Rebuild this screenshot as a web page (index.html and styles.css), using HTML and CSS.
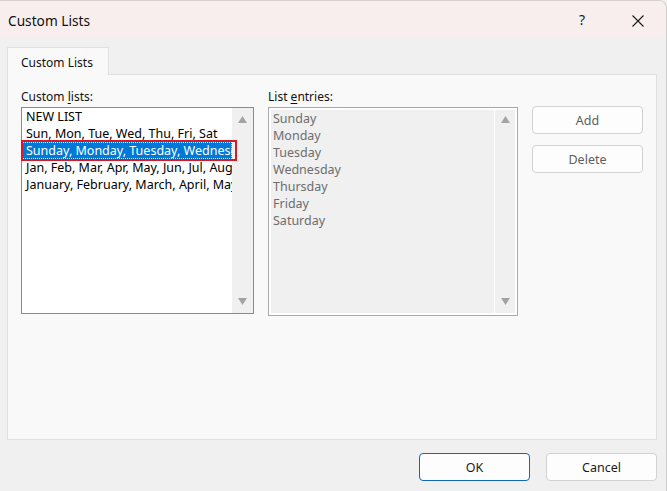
FILE: index.html
```html
<!DOCTYPE html>
<html>
<head>
<meta charset="utf-8">
<title>Custom Lists</title>
<link rel="stylesheet" href="styles.css">
</head>
<body>
<div class="window">
  <div class="titlebar">
    <span class="title">Custom Lists</span>
    <div class="title-actions">
      <span class="help">?</span>
      <span class="close">
        <svg width="12" height="12" viewBox="0 0 12 12"><path d="M0.5 0.5 L11.5 11.5 M11.5 0.5 L0.5 11.5" stroke="#1a1a1a" stroke-width="1.1" fill="none"/></svg>
      </span>
    </div>
  </div>
  <div class="content">
    <div class="tabs"><div class="tab">Custom Lists</div></div>
    <div class="panel">
      <div class="col col-left">
        <div class="label">Custom <u>l</u>ists:</div>
        <div class="listbox">
          <ul class="items">
            <li>NEW LIST</li>
            <li>Sun, Mon, Tue, Wed, Thu, Fri, Sat</li>
            <li class="selected">Sunday, Monday, Tuesday, Wednesday, Thursday, Friday, Saturday</li>
            <li>Jan, Feb, Mar, Apr, May, Jun, Jul, Aug, Sep, Oct, Nov, Dec</li>
            <li>January, February, March, April, May, June, July, August, September, October, November, December</li>
          </ul>
          <div class="scrollbar">
            <svg class="arrow" width="9" height="7" viewBox="0 0 9 7"><path d="M4.5 0 L9 7 L0 7 Z" fill="#a3a3a3"/></svg>
            <svg class="arrow" width="9" height="7" viewBox="0 0 9 7"><path d="M0 0 L9 0 L4.5 7 Z" fill="#a3a3a3"/></svg>
          </div>
          <div class="annotation"></div>
        </div>
      </div>
      <div class="col col-right">
        <div class="label">List <u>e</u>ntries:</div>
        <div class="listbox listbox-disabled">
          <ul class="items">
            <li>Sunday</li>
            <li>Monday</li>
            <li>Tuesday</li>
            <li>Wednesday</li>
            <li>Thursday</li>
            <li>Friday</li>
            <li>Saturday</li>
          </ul>
          <div class="scrollbar">
            <svg class="arrow" width="9" height="7" viewBox="0 0 9 7"><path d="M4.5 0 L9 7 L0 7 Z" fill="#a3a3a3"/></svg>
            <svg class="arrow" width="9" height="7" viewBox="0 0 9 7"><path d="M0 0 L9 0 L4.5 7 Z" fill="#a3a3a3"/></svg>
          </div>
        </div>
      </div>
      <div class="col col-buttons">
        <button class="btn btn-disabled">Add</button>
        <button class="btn btn-disabled">Delete</button>
      </div>
    </div>
    <div class="footer">
      <button class="btn btn-default">OK</button>
      <button class="btn">Cancel</button>
    </div>
  </div>
</div>
</body>
</html>
```

FILE: styles.css
```css
* { box-sizing: border-box; }

html, body {
  margin: 0;
  padding: 0;
  background: #f0f0f0;
}

body {
  font-family: "Noto Sans", "Open Sans", sans-serif;
  color: #000;
}

.window {
  width: 667px;
  height: 491px;
  background: #f0f0f0;
  border-top: 1px solid #d6d0d0;
  border-right: 1px solid #cfcfcf;
  border-radius: 0 8px 0 8px;
  overflow: hidden;
  display: flex;
  flex-direction: column;
}

.titlebar {
  height: 37px;
  background: #f9eeee;
  display: flex;
  align-items: center;
  justify-content: space-between;
  padding-left: 8px;
  flex-shrink: 0;
}

.title {
  font-size: 13.7px;
  color: #111;
  margin-top: 1px;
}

.title-actions {
  display: flex;
  align-items: center;
  height: 100%;
}

.help {
  font-size: 14px;
  width: 46px;
  text-align: center;
  color: #1a1a1a;
  margin-right: 10px;
}

.close {
  width: 46px;
  height: 100%;
  display: flex;
  align-items: center;
  justify-content: center;
  margin-right: 5px;
  padding-top: 2px;
}

.content {
  flex: 1;
  padding: 9px 9px 0 7px;
  display: flex;
  flex-direction: column;
}

.tabs {
  display: flex;
  height: 27px;
}

.tab {
  width: 102px;
  height: 28px;
  background: #f9f9f9;
  border: 1px solid #e0e0e0;
  border-bottom: none;
  font-size: 12px;
  padding: 6px 0 0 13px;
  position: relative;
  z-index: 1;
  color: #111;
}

.panel {
  height: 366px;
  width: 650px;
  background: #f9f9f9;
  border: 1px solid #e0e0e0;
  padding: 13px 13px 0 13px;
  display: flex;
  align-items: flex-start;
  gap: 14px;
}

.col { display: flex; flex-direction: column; }
.col-left { width: 233px; }
.col-right { width: 250px; }
.col-buttons { width: 111px; padding-top: 18px; gap: 11px; }

.label {
  font-size: 12px;
  line-height: 17px;
  margin-bottom: 2px;
  color: #111;
}
.label u { text-decoration-thickness: 1px; text-underline-offset: 2px; }

.listbox {
  position: relative;
  display: flex;
  height: 207px;
  background: #fff;
  border: 1px solid #8a8a8a;
}

.items {
  list-style: none;
  margin: 0;
  padding: 0;
  flex: 1;
  min-width: 0;
  overflow: hidden;
  font-size: 12.5px;
  line-height: 17px;
}

.items li {
  white-space: nowrap;
  overflow: hidden;
  padding-left: 4px;
  color: #000;
}

.items li.selected {
  background: #0078d7;
  color: #fff;
  outline: 1px dotted rgba(255, 255, 255, 0.85);
  outline-offset: -1px;
}

.scrollbar {
  width: 21px;
  background: #f0f0f0;
  display: flex;
  flex-direction: column;
  justify-content: space-between;
  align-items: center;
  padding: 8px 0 8px 0;
}

.annotation {
  position: absolute;
  left: -1px;
  top: 32px;
  width: 216px;
  height: 21px;
  border: 2px solid #e3161d;
  pointer-events: none;
}

.listbox-disabled {
  height: 209px;
  border-color: #a9a9a9;
  padding: 2px;
  gap: 1px;
}

.listbox-disabled .items {
  background: #f0f0f0;
}

.listbox-disabled .items li {
  color: #6d6d6d;
  padding-left: 2px;
}

.listbox-disabled .scrollbar {
  width: 20px;
  padding: 6px 0 8px 0;
}

.btn {
  font-family: "Noto Sans", "Open Sans", sans-serif;
  font-size: 12.5px;
  height: 28px;
  width: 111px;
  background: #fdfdfd;
  border: 1px solid #d2d2d2;
  border-radius: 4px;
  color: #1b1b1b;
  padding: 0;
}

.btn-disabled { color: #5e5e5e; }

.btn-default {
  border-color: #1166bb;
}

.footer {
  display: flex;
  justify-content: flex-end;
  gap: 16px;
  padding-top: 13px;
  padding-right: 0;
}
```
